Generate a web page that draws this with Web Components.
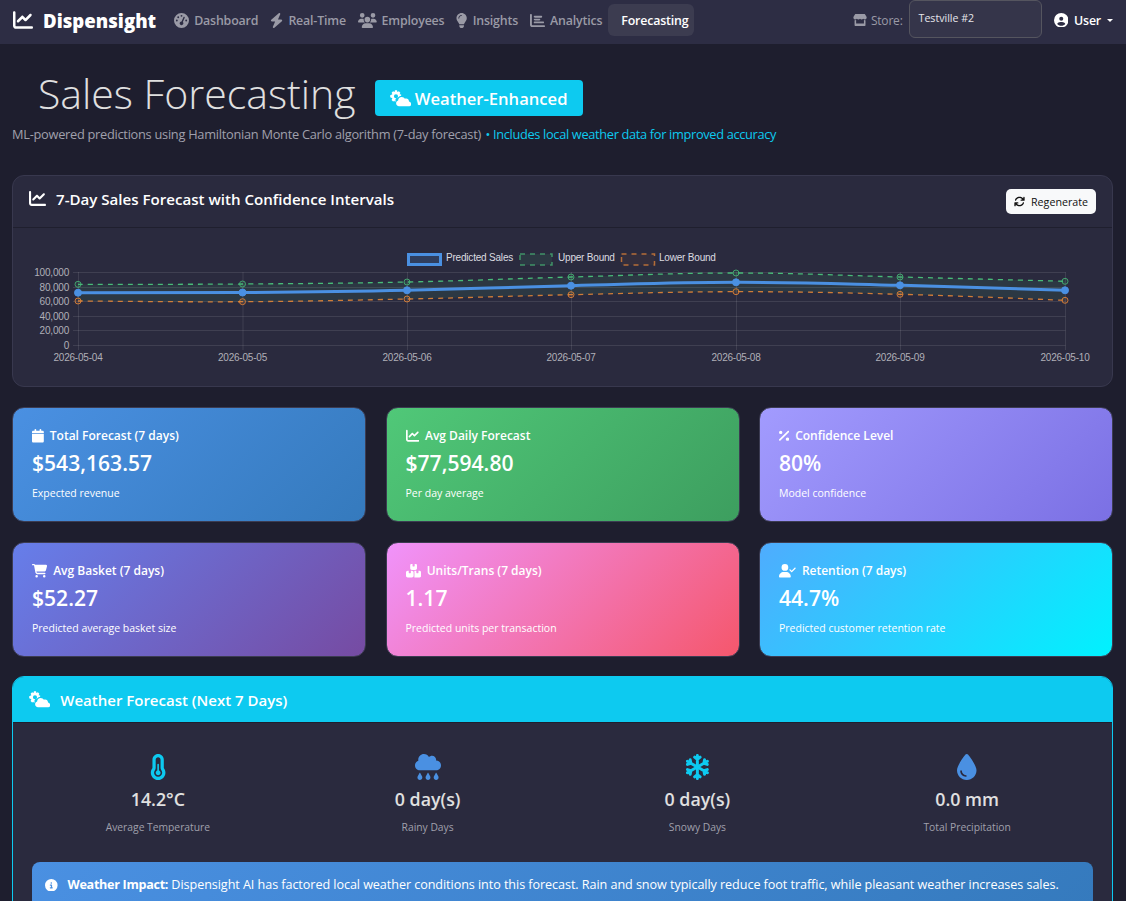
<!DOCTYPE html>
<html lang="en">
<head>
<meta charset="utf-8">
<title>Sales Forecasting</title>
<style>
  html { height: 100%; overflow: hidden; }
  body {
    margin: 0;
    height: 100%;
    overflow: hidden;
    background: #1e1e2e;
    color: #e0e0e0;
    font-family: "Open Sans", "Noto Sans", sans-serif;
    font-size: 13px;
  }
  main { display: block; padding: 0 13px 0 12px; }
</style>
</head>
<body>
<app-navbar>
  <nav-link icon="gauge">Dashboard</nav-link>
  <nav-link icon="bolt">Real-Time</nav-link>
  <nav-link icon="users">Employees</nav-link>
  <nav-link icon="bulb">Insights</nav-link>
  <nav-link icon="bars">Analytics</nav-link>
  <nav-link active>Forecasting</nav-link>
</app-navbar>
<main>
  <page-header>Sales Forecasting</page-header>
  <forecast-chart></forecast-chart>
  <stat-grid>
    <stat-card kind="blue" icon="calendar" title="Total Forecast (7 days)" value="$543,163.57">Expected revenue</stat-card>
    <stat-card kind="green" icon="line" title="Avg Daily Forecast" value="$77,594.80">Per day average</stat-card>
    <stat-card kind="violet" icon="percent" title="Confidence Level" value="80%">Model confidence</stat-card>
    <stat-card kind="purple" icon="cart" title="Avg Basket (7 days)" value="$52.27">Predicted average basket size</stat-card>
    <stat-card kind="pink" icon="boxes" title="Units/Trans (7 days)" value="1.17">Predicted units per transaction</stat-card>
    <stat-card kind="cyan" icon="usercheck" title="Retention (7 days)" value="44.7%">Predicted customer retention rate</stat-card>
  </stat-grid>
  <weather-panel>
    <weather-stat icon="temp" color="#0dcaf0" value="14.2°C">Average Temperature</weather-stat>
    <weather-stat icon="rain" color="#4a90e2" value="0 day(s)">Rainy Days</weather-stat>
    <weather-stat icon="snow" color="#0dcaf0" value="0 day(s)">Snowy Days</weather-stat>
    <weather-stat icon="drop" color="#4a90e2" value="0.0 mm">Total Precipitation</weather-stat>
  </weather-panel>
</main>

<script>
const ICONS = {
  line: [512, "M64 64c0-17.7-14.3-32-32-32S0 46.3 0 64V400c0 44.2 35.8 80 80 80H480c17.7 0 32-14.3 32-32s-14.3-32-32-32H80c-8.8 0-16-7.2-16-16V64zm406.6 86.6c12.5-12.5 12.5-32.8 0-45.3s-32.8-12.5-45.3 0L320 210.7l-57.4-57.4c-12.5-12.5-32.8-12.5-45.3 0l-112 112c-12.5 12.5-12.5 32.8 0 45.3s32.8 12.5 45.3 0L240 221.3l57.4 57.4c12.5 12.5 32.8 12.5 45.3 0l128-128z"],
  gauge: [512, "M0 256a256 256 0 1 1 512 0A256 256 0 1 1 0 256zM288 96a32 32 0 1 0 -64 0 32 32 0 1 0 64 0zM256 416c35.3 0 64-28.7 64-64c0-17.4-6.9-33.1-18.1-44.6L366 161.7c5.3-12.1-.2-26.3-12.3-31.6s-26.3 .2-31.6 12.3L257.9 288c-.6 0-1.3 0-1.9 0c-35.3 0-64 28.7-64 64s28.7 64 64 64zM176 144a32 32 0 1 0 -64 0 32 32 0 1 0 64 0zM96 288a32 32 0 1 0 0-64 32 32 0 1 0 0 64zm352-32a32 32 0 1 0 -64 0 32 32 0 1 0 64 0z"],
  bolt: [448, "M349.4 44.6c5.9-13.7 1.5-29.7-10.6-38.5s-28.6-8-39.9 1.8l-256 224c-10 8.8-13.6 22.9-8.9 35.3S50.7 288 64 288H175.5L98.6 467.4c-5.9 13.7-1.5 29.7 10.6 38.5s28.6 8 39.9-1.8l256-224c10-8.8 13.6-22.9 8.9-35.3s-16.6-20.7-30-20.7H272.5L349.4 44.6z"],
  users: [640, "M144 0a80 80 0 1 1 0 160A80 80 0 1 1 144 0zM512 0a80 80 0 1 1 0 160A80 80 0 1 1 512 0zM0 298.7C0 239.8 47.8 192 106.7 192h42.7c15.9 0 31 3.5 44.6 9.7c-1.3 7.2-1.9 14.7-1.9 22.3c0 38.2 16.8 72.5 43.3 96c-.2 0-.4 0-.7 0H21.3C9.6 320 0 310.4 0 298.7zM405.3 320c-.2 0-.4 0-.7 0c26.6-23.5 43.3-57.8 43.3-96c0-7.6-.7-15-1.9-22.3c13.6-6.3 28.7-9.7 44.6-9.7h42.7C592.2 192 640 239.8 640 298.7c0 11.8-9.6 21.3-21.3 21.3H405.3zM224 224a96 96 0 1 1 192 0 96 96 0 1 1 -192 0zM128 485.3C128 411.7 187.7 352 261.3 352H378.7C452.3 352 512 411.7 512 485.3c0 14.7-11.9 26.7-26.7 26.7H154.7c-14.7 0-26.7-11.9-26.7-26.7z"],
  bulb: [384, "M272 384c9.6-31.9 29.5-59.1 49.2-86.2l0 0c5.2-7.1 10.4-14.2 15.4-21.4c19.8-28.5 31.4-63 31.4-100.3C368 78.8 289.2 0 192 0S16 78.8 16 176c0 37.3 11.6 71.9 31.4 100.3c5 7.2 10.2 14.3 15.4 21.4l0 0c19.8 27.1 39.7 54.4 49.2 86.2H272zM192 512c44.2 0 80-35.8 80-80V416H112v16c0 44.2 35.8 80 80 80zM112 176c0 8.8-7.2 16-16 16s-16-7.2-16-16c0-61.9 50.1-112 112-112c8.8 0 16 7.2 16 16s-7.2 16-16 16c-44.2 0-80 35.8-80 80z"],
  bars: [512, "M32 32c17.7 0 32 14.3 32 32V400c0 8.8 7.2 16 16 16H480c17.7 0 32 14.3 32 32s-14.3 32-32 32H80c-44.2 0-80-35.8-80-80V64C0 46.3 14.3 32 32 32zm96 96c0-17.7 14.3-32 32-32H384c17.7 0 32 14.3 32 32s-14.3 32-32 32H160c-17.7 0-32-14.3-32-32zm32 64H320c17.7 0 32 14.3 32 32s-14.3 32-32 32H160c-17.7 0-32-14.3-32-32s14.3-32 32-32zm0 96H448c17.7 0 32 14.3 32 32s-14.3 32-32 32H160c-17.7 0-32-14.3-32-32s14.3-32 32-32z"],
  store: [576, "M547.6 103.8L490.3 13.1C485.2 5 476.1 0 466.4 0H109.6C99.9 0 90.8 5 85.7 13.1L28.3 103.8c-29.6 46.8-3.4 111.9 51.9 119.4c4 .5 8.1 .8 12.1 .8c26.1 0 49.3-11.4 65.2-29c15.9 17.6 39.1 29 65.2 29c26.1 0 49.3-11.4 65.2-29c15.9 17.6 39.1 29 65.2 29c26.2 0 49.3-11.4 65.2-29c16 17.6 39.1 29 65.2 29c4.1 0 8.1-.3 12.1-.8c55.5-7.4 81.8-72.5 52.1-119.4zM499.7 254.9l-.1 0c-5.3 .7-10.7 1.1-16.2 1.1c-12.4 0-24.3-1.9-35.4-5.3V384H128V250.6c-11.2 3.5-23.2 5.4-35.6 5.4c-5.5 0-11-.4-16.3-1.1l-.1 0c-4.1-.6-8.1-1.3-12-2.3V384v64c0 35.3 28.7 64 64 64H448c35.3 0 64-28.7 64-64V384 252.6c-4 1-8 1.8-12.3 2.3z"],
  usercircle: [512, "M399 384.2C376.9 345.8 335.4 320 288 320H224c-47.4 0-88.9 25.8-111 64.2c35.2 39.2 86.2 63.8 143 63.8s107.8-24.7 143-63.8zM0 256a256 256 0 1 1 512 0A256 256 0 1 1 0 256zm256 16a72 72 0 1 0 0-144 72 72 0 1 0 0 144z"],
  sync: [512, "M105.1 202.6c7.7-21.8 20.2-42.3 37.8-59.8c62.5-62.5 163.8-62.5 226.3 0L386.3 160H336c-17.7 0-32 14.3-32 32s14.3 32 32 32H463.5c0 0 0 0 0 0h.4c17.7 0 32-14.3 32-32V64c0-17.7-14.3-32-32-32s-32 14.3-32 32v51.2L414.4 97.6c-87.5-87.5-229.3-87.5-316.8 0C73.2 122 55.6 150.7 44.8 181.4c-5.9 16.7 2.9 34.9 19.5 40.8s34.9-2.9 40.8-19.5zM39 289.3c-5 1.5-9.8 4.2-13.7 8.2c-4 4-6.7 8.8-8.1 14c-.3 1.2-.6 2.5-.8 3.8c-.3 1.7-.4 3.4-.4 5.1V448c0 17.7 14.3 32 32 32s32-14.3 32-32V396.9l17.6 17.5 0 0c87.5 87.4 229.3 87.4 316.7 0c24.4-24.4 42.1-53.1 52.9-83.7c5.9-16.7-2.9-34.9-19.5-40.8s-34.9 2.9-40.8 19.5c-7.7 21.8-20.2 42.3-37.8 59.8c-62.5 62.5-163.8 62.5-226.3 0l-.1-.1L125.6 352H176c17.7 0 32-14.3 32-32s-14.3-32-32-32H48.4c-1.6 0-3.2 .1-4.8 .3s-3.1 .5-4.6 1z"],
  calendar: [448, "M96 32V64H48C21.5 64 0 85.5 0 112v48H448V112c0-26.5-21.5-48-48-48H352V32c0-17.7-14.3-32-32-32s-32 14.3-32 32V64H160V32c0-17.7-14.3-32-32-32S96 14.3 96 32zM448 192H0V464c0 26.5 21.5 48 48 48H400c26.5 0 48-21.5 48-48V192z"],
  percent: [384, "M374.6 118.6c12.5-12.5 12.5-32.8 0-45.3s-32.8-12.5-45.3 0l-320 320c-12.5 12.5-12.5 32.8 0 45.3s32.8 12.5 45.3 0l320-320zM128 128A64 64 0 1 0 0 128a64 64 0 1 0 128 0zM384 384a64 64 0 1 0 -128 0 64 64 0 1 0 128 0z"],
  cart: [576, "M0 24C0 10.7 10.7 0 24 0H69.5c22 0 41.5 12.8 50.6 32h411c26.3 0 45.5 25 38.6 50.4l-41 152.3c-8.5 31.4-37 53.3-69.5 53.3H170.7l5.4 28.5c2.2 11.3 12.1 19.5 23.6 19.5H488c13.3 0 24 10.7 24 24s-10.7 24-24 24H199.7c-34.6 0-64.3-24.6-70.7-58.5L77.4 54.5c-.7-3.8-4-6.5-7.9-6.5H24C10.7 48 0 37.3 0 24zM128 464a48 48 0 1 1 96 0 48 48 0 1 1 -96 0zm336-48a48 48 0 1 1 0 96 48 48 0 1 1 0-96z"],
  boxes: [576, "M248 0H208c-26.5 0-48 21.5-48 48V160c0 35.3 28.7 64 64 64H352c35.3 0 64-28.7 64-64V48c0-26.5-21.5-48-48-48H328V80c0 8.8-7.2 16-16 16H264c-8.8 0-16-7.2-16-16V0zM64 256c-35.3 0-64 28.7-64 64V448c0 35.3 28.7 64 64 64H224c35.3 0 64-28.7 64-64V320c0-35.3-28.7-64-64-64H184v80c0 8.8-7.2 16-16 16H120c-8.8 0-16-7.2-16-16V256H64zM352 512H512c35.3 0 64-28.7 64-64V320c0-35.3-28.7-64-64-64H472v80c0 8.8-7.2 16-16 16H408c-8.8 0-16-7.2-16-16V256H352c-15 0-28.8 5.1-39.7 13.8c4.9 10.4 7.7 22 7.7 34.2V464c0 12.2-2.8 23.8-7.7 34.2C323.2 506.9 337 512 352 512z"],
  usercheck: [640, "M96 128a128 128 0 1 1 256 0A128 128 0 1 1 96 128zM0 482.3C0 383.8 79.8 304 178.3 304h91.4C368.2 304 448 383.8 448 482.3c0 16.4-13.3 29.7-29.7 29.7H29.7C13.3 512 0 498.7 0 482.3zM625 177L497 305c-9.4 9.4-24.6 9.4-33.9 0l-64-64c-9.4-9.4-9.4-24.6 0-33.9s24.6-9.4 33.9 0l47 47L591 143c9.4-9.4 24.6-9.4 33.9 0s9.4 24.6 0 33.9z"],
  temp: [320, "M160 64c-26.5 0-48 21.5-48 48V276.5c0 17.3-7.1 31.9-15.3 42.5C86.2 332.6 80 349.5 80 368c0 44.2 35.8 80 80 80s80-35.8 80-80c0-18.5-6.2-35.4-16.7-48.9c-10.9-13.8-15.3-28.9-15.3-42.6V112c0-26.5-21.5-48-48-48zM48 112C48 50.2 98.1 0 160 0s112 50.1 112 112V276.5c0 .1 .1 .3 .2 .6c.2 .6 .8 1.6 1.7 2.8c18.9 24.4 30.1 55 30.1 88.1c0 79.5-64.5 144-144 144S16 447.5 16 368c0-33.2 11.2-63.8 30.1-88.1c.9-1.2 1.5-2.2 1.7-2.8c.1-.3 .2-.5 .2-.6V112zM208 368c0 26.5-21.5 48-48 48s-48-21.5-48-48c0-20.9 13.4-38.7 32-45.3V208c0-8.8 7.2-16 16-16s16 7.2 16 16V322.7c18.6 6.6 32 24.4 32 45.3z", true],
  rain: [512, "M96 320c-53 0-96-43-96-96c0-42.5 27.6-78.6 65.9-91.2C64.7 126.1 64 119.1 64 112C64 50.1 114.1 0 176 0c43.1 0 80.5 24.3 99.2 60c14.7-17.1 36.5-28 60.8-28c44.2 0 80 35.8 80 80c0 5.5-.6 10.8-1.6 16c.5 0 1.1 0 1.6 0c53 0 96 43 96 96s-43 96-96 96H96zm-6.8 52c1.3-2.5 3.9-4 6.8-4s5.4 1.5 6.8 4l35.1 64.6c4.1 7.5 6.2 15.8 6.2 24.3v3c0 26.5-21.5 48-48 48s-48-21.5-48-48v-3c0-8.5 2.1-16.9 6.2-24.3L89.2 372zm160 0c1.3-2.5 3.9-4 6.8-4s5.4 1.5 6.8 4l35.1 64.6c4.1 7.5 6.2 15.8 6.2 24.3v3c0 26.5-21.5 48-48 48s-48-21.5-48-48v-3c0-8.5 2.1-16.9 6.2-24.3L249.2 372zm124.9 64.6L409.2 372c1.3-2.5 3.9-4 6.8-4s5.4 1.5 6.8 4l35.1 64.6c4.1 7.5 6.2 15.8 6.2 24.3v3c0 26.5-21.5 48-48 48s-48-21.5-48-48v-3c0-8.5 2.1-16.9 6.2-24.3z"],
  drop: [384, "M192 512C86 512 0 426 0 320C0 228.8 130.2 57.7 166.6 11.7C172.6 4.2 181.5 0 191.1 0h1.8c9.6 0 18.5 4.2 24.5 11.7C253.8 57.7 384 228.8 384 320c0 106-86 192-192 192zM96 336c0-8.8-7.2-16-16-16s-16 7.2-16 16c0 61.9 50.1 112 112 112c8.8 0 16-7.2 16-16s-7.2-16-16-16c-44.2 0-80-35.8-80-80z"],
  info: [512, "M256 512A256 256 0 1 0 256 0a256 256 0 1 0 0 512zM216 336h24V272H216c-13.3 0-24-10.7-24-24s10.7-24 24-24h48c13.3 0 24 10.7 24 24v88h8c13.3 0 24 10.7 24 24s-10.7 24-24 24H216c-13.3 0-24-10.7-24-24s10.7-24 24-24zm40-208a32 32 0 1 1 0 64 32 32 0 1 1 0-64z"],
  cloudsun: [640, "M148 6L212 6L222 58L268 36L312 80L288 128L336 138L336 172C300 178 270 196 252 222C205 232 172 262 160 302L172 320L150 372L138 322L92 344L48 300L72 252L6 222L6 158L72 128L48 80L92 36L138 58ZM180 128a62 62 0 1 0 0 124 62 62 0 1 0 0-124zM272 490c-49 0-88-39-88-88 0-39 25-72 60-84 0-60 49-108 108-108 41 0 77 23 95 57 13-7 27-9 41-9 47 0 84 38 84 84l0 6c38 8 68 42 68 82 0 33-27 60-60 60z", true],
  snow: [448, null]
};

// snowflake is simplest as six rotated arms
const SNOW_ARM = '<path d="M224 256V28M224 108L170 62M224 108L278 62"/>';
const SNOW = [0, 60, 120, 180, 240, 300]
  .map(a => `<g transform="rotate(${a} 224 256)">${SNOW_ARM}</g>`).join("");

class AppIcon extends HTMLElement {
  connectedCallback() {
    const root = this.attachShadow({ mode: "open" });
    const [w, d, evenodd] = ICONS[this.getAttribute("name")];
    const body = d
      ? `<path fill="currentColor" ${evenodd ? 'fill-rule="evenodd"' : ""} d="${d}"/>`
      : `<g fill="none" stroke="currentColor" stroke-width="58" stroke-linecap="round">${SNOW}</g>`;
    root.innerHTML = `
      <style>
        :host { display: inline-flex; align-items: center; height: 1em; flex: none; }
        svg { display: block; height: 1em; width: auto; }
      </style>
      <svg viewBox="0 0 ${w} 512" aria-hidden="true">${body}</svg>`;
  }
}

class AppNavbar extends HTMLElement {
  connectedCallback() {
    this.attachShadow({ mode: "open" }).innerHTML = `
      <style>
        :host {
          display: flex;
          align-items: center;
          height: 44px;
          padding: 0 13px 4px;
          background: #2d2d44;
          box-sizing: border-box;
        }
        .brand { display: flex; align-items: center; color: #fff; font-weight: 800; font-size: 18.6px; margin-right: 12px; }
        .brand app-icon { font-size: 20px; margin-right: 10px; }
        .links { display: flex; align-items: center; }
        .right { margin-left: auto; display: flex; align-items: center; font-size: 12.4px; letter-spacing: -.2px; color: #9a9aa6; }
        .right > app-icon { font-size: 12.5px; }
        .user app-icon { font-size: 14.5px; }
        .store { margin: 0 6px 0 4px; font-size: 12px; }
        .select {
          width: 133px; height: 38px; box-sizing: border-box;
          margin-top: -2px;
          padding: 0 9px 3px;
          display: flex; align-items: center;
          background: #35354a; border: 1px solid #55555f; border-radius: 6px;
          color: #e6e6ea; font-size: 10.6px; letter-spacing: 0;
        }
        .user { display: flex; align-items: center; color: #fff; font-weight: 600; margin-left: 12px; }
        .user .n { margin: 0 6px 0 6px; }
        .caret { width: 0; height: 0; border: 3.5px solid transparent; border-top-color: #fff; border-bottom: 0; }
      </style>
      <div class="brand"><app-icon name="line"></app-icon>Dispensight</div>
      <div class="links"><slot></slot></div>
      <div class="right">
        <app-icon name="store"></app-icon><span class="store">Store:</span>
        <div class="select">Testville #2</div>
        <div class="user"><app-icon name="usercircle"></app-icon><span class="n">User</span><span class="caret"></span></div>
      </div>`;
  }
}

class NavLink extends HTMLElement {
  connectedCallback() {
    const icon = this.getAttribute("icon");
    this.attachShadow({ mode: "open" }).innerHTML = `
      <style>
        :host {
          display: flex; align-items: center; gap: 5px;
          height: 32px; padding: 0 6px;
          font-size: 12.4px; letter-spacing: -.18px; font-weight: 600; color: #9a9aa6;
          border-radius: 6px;
        }
        :host([active]) { color: #fff; background: #3c3c50; padding-left: 13px; }
        app-icon { font-size: 15px; }
      </style>
      ${icon ? `<app-icon name="${icon}"></app-icon>` : ""}<slot></slot>`;
  }
}

class PageHeader extends HTMLElement {
  connectedCallback() {
    this.attachShadow({ mode: "open" }).innerHTML = `
      <style>
        :host { display: block; height: 131px; box-sizing: border-box; padding-top: 22px; }
        .row { display: flex; align-items: flex-start; height: 54px; padding-left: 26px; gap: 19px; }
        h1 { margin: 0; font-weight: 300; font-size: 41px; line-height: 54px; color: #e0e0e0; }
        .badge {
          display: flex; align-items: center; gap: 4px;
          height: 36px; padding: 0 16px 0 15px; margin-top: 14px;
          background: #0dcaf0; color: #fff; border-radius: 4px;
          font-size: 16.6px; font-weight: 600;
        }
        .badge app-icon { font-size: 17px; }
        p { margin: 4px 0 0; font-size: 12.8px; letter-spacing: -.27px; line-height: 20px; color: #a0a0ac; }
        p span { color: #0dcaf0; margin-left: 1.5px; letter-spacing: -.33px; }
      </style>
      <div class="row"><h1><slot></slot></h1><div class="badge"><app-icon name="cloudsun"></app-icon>Weather-Enhanced</div></div>
      <p>ML-powered predictions using Hamiltonian Monte Carlo algorithm (7-day forecast) <span>• Includes local weather data for improved accuracy</span></p>`;
  }
}

// chart points are in page px relative to the card's top-left corner
const DATES = ["2026-05-04", "2026-05-05", "2026-05-06", "2026-05-07", "2026-05-08", "2026-05-09", "2026-05-10"];
const XS = [65, 229.5, 394, 558, 723, 887, 1052];
const PREDICTED = [64.7, 64.5, 62.3, 57.7, 54.3, 57.3, 62.3];
const UPPER = [56.3, 56, 54, 49, 45, 49, 53.3];
const LOWER = [73, 73.7, 71, 66.7, 63.7, 66.3, 72.3];
const TICKS = ["100,000", "80,000", "60,000", "40,000", "20,000", "0"];

function smooth(ys, reverse) {
  let pts = XS.map((x, i) => [x, ys[i]]);
  if (reverse) pts = pts.reverse();
  let d = "";
  const t = 0.2;
  pts.forEach((p, i) => {
    if (i === 0) return;
    const a = pts[i - 2] || pts[i - 1], b = pts[i - 1], n = pts[i + 1] || p;
    const c1 = [b[0] + (p[0] - a[0]) * t, b[1] + (p[1] - a[1]) * t];
    const c2 = [p[0] - (n[0] - b[0]) * t, p[1] - (n[1] - b[1]) * t];
    d += `C${c1[0].toFixed(1)} ${c1[1].toFixed(1)} ${c2[0].toFixed(1)} ${c2[1].toFixed(1)} ${p[0]} ${p[1]}`;
  });
  return d;
}

class ForecastChart extends HTMLElement {
  connectedCallback() {
    const top = 44, bottom = 117, step = (bottom - top) / 5;
    const grid = TICKS.map((t, i) => {
      const y = Math.round(top + step * i) + .5;
      return `<line x1="60" x2="1052.5" y1="${y}" y2="${y}" class="grid"/>
        <text x="56" y="${y + 3}" text-anchor="end" class="tick">${t}</text>`;
    }).join("");
    const cols = XS.map((x, i) => `<line x1="${x + .5}" x2="${x + .5}" y1="${top}" y2="${bottom + 5}" class="grid"/>
      <text x="${x}" y="${bottom + 16}" text-anchor="middle" class="tick">${DATES[i]}</text>`).join("");
    const dots = (ys, cls, r) => XS.map((x, i) => `<circle cx="${x}" cy="${ys[i]}" r="${r}" class="${cls}"/>`).join("");
    const band = `M${XS[0]} ${UPPER[0]}${smooth(UPPER)}L${XS[6]} ${LOWER[6]}${smooth(LOWER, true)}Z`;

    this.attachShadow({ mode: "open" }).innerHTML = `
      <style>
        :host {
          display: block; height: 212px; box-sizing: border-box;
          background: #2a2a3e; border: 1px solid #38384e; border-radius: 12px; overflow: hidden;
        }
        header {
          display: flex; align-items: center; justify-content: space-between;
          height: 52px; padding: 0 16px; box-sizing: border-box;
          border-bottom: 1px solid #1f1f2e;
          color: #fff;
        }
        h2 { margin: 0 0 6px; display: flex; align-items: center; gap: 10px; font-size: 15.1px; font-weight: 600; }
        h2 app-icon { font-size: 17px; }
        button {
          display: flex; align-items: center; gap: 6px;
          width: 90px; height: 25px; padding: 0 8px; box-sizing: border-box;
          background: #f8f9fa; color: #111; border: 0; border-radius: 5px;
          font: 10.7px "Open Sans", sans-serif;
        }
        button app-icon { font-size: 11px; }
        svg { display: block; }
        text { font: 10px "Liberation Sans", Arial, sans-serif; letter-spacing: -.2px; }
        .tick { fill: #b0b0b8; }
        .leg { fill: #dcdce0; }
        .grid { stroke: rgba(255,255,255,.1); stroke-width: 1; }
        .pred { fill: none; stroke: #4a90e2; stroke-width: 3; }
        .up { fill: none; stroke: #48bb78; stroke-width: 1.3; stroke-dasharray: 5 5; }
        .lo { fill: none; stroke: #ed8936; stroke-width: 1.3; stroke-dasharray: 5 5; opacity: .85; }
        .dp { fill: #4a90e2; stroke: #4a90e2; }
        .du { fill: rgba(72,187,120,.1); stroke: #48bb78; stroke-opacity: .8; }
        .dl { fill: rgba(237,137,54,.1); stroke: #ed8936; stroke-opacity: .8; }
      </style>
      <header>
        <h2><app-icon name="line"></app-icon>7-Day Sales Forecast with Confidence Intervals</h2>
        <button><app-icon name="sync"></app-icon>Regenerate</button>
      </header>
      <svg width="1099" height="158" viewBox="0 0 1099 158">
        <rect x="395.5" y="26.5" width="32" height="10" fill="rgba(74,144,226,.2)" stroke="#4a90e2" stroke-width="3"/>
        <text x="433" y="33" class="leg">Predicted Sales</text>
        <rect x="507" y="26" width="32" height="11" fill="rgba(72,187,120,.1)" stroke="#48bb78" stroke-opacity=".7" stroke-width="1.5" stroke-dasharray="5 5"/>
        <text x="545" y="33" class="leg">Upper Bound</text>
        <rect x="608.5" y="26" width="33" height="11" fill="rgba(237,137,54,.05)" stroke="#ed8936" stroke-opacity=".7" stroke-width="1.5" stroke-dasharray="5 5"/>
        <text x="646" y="33" class="leg">Lower Bound</text>
        ${grid}${cols}
        <path d="${band}" fill="rgba(72,187,120,.1)"/>
        <path d="M${XS[0]} ${UPPER[0]}${smooth(UPPER)}" class="up"/>
        <path d="M${XS[0]} ${LOWER[0]}${smooth(LOWER)}" class="lo"/>
        <path d="M${XS[0]} ${PREDICTED[0]}${smooth(PREDICTED)}" class="pred"/>
        ${dots(UPPER, "du", 3)}${dots(LOWER, "dl", 3)}${dots(PREDICTED, "dp", 3.5)}
      </svg>`;
  }
}

class StatGrid extends HTMLElement {
  connectedCallback() {
    this.attachShadow({ mode: "open" }).innerHTML = `
      <style>
        :host {
          display: grid;
          grid-template-columns: repeat(3, 1fr);
          grid-auto-rows: 115px;
          gap: 20px 19.5px;
          margin: 20px 0 19px;
        }
      </style>
      <slot></slot>`;
  }
}

const GRADIENTS = {
  blue: "#4a90e2, #357abd",
  green: "#50c878, #3d9e5f",
  violet: "#a29bfe, #7b70e4",
  purple: "#667eea, #764ba2",
  pink: "#f093fb, #f5576c",
  cyan: "#4facfe, #00f2fe"
};

class StatCard extends HTMLElement {
  connectedCallback() {
    const grad = GRADIENTS[this.getAttribute("kind")];
    this.attachShadow({ mode: "open" }).innerHTML = `
      <style>
        :host {
          display: block; box-sizing: border-box;
          padding: 18px 19px;
          background: linear-gradient(135deg, ${grad});
          border: 1px solid #3c3c52; border-radius: 12px;
          color: #fff;
        }
        .t { display: flex; align-items: center; gap: 6px; font-size: 12px; font-weight: 600; line-height: 20px; }
        .t app-icon { font-size: 13.5px; }
        .v { font-size: 21.1px; font-weight: 600; line-height: 32px; margin-top: 1px; }
        .s { font-size: 10.5px; line-height: 16px; margin-top: 6px; }
      </style>
      <div class="t"><app-icon name="${this.getAttribute("icon")}"></app-icon>${this.getAttribute("title")}</div>
      <div class="v">${this.getAttribute("value")}</div>
      <div class="s"><slot></slot></div>`;
  }
}

class WeatherPanel extends HTMLElement {
  connectedCallback() {
    this.attachShadow({ mode: "open" }).innerHTML = `
      <style>
        :host {
          display: block;
          background: #2a2a3e; border: 1px solid #0dcaf0; border-radius: 12px; overflow: hidden;
        }
        header {
          display: flex; align-items: center; gap: 10px;
          height: 45px; padding: 0 16px;
          background: #0dcaf0; color: #fff;
          border-bottom: 1px solid #1f1f2e;
          font-size: 15px; font-weight: 600;
        }
        header app-icon { font-size: 17px; }
        .body { padding: 31px 19px 40px; }
        .cols { display: grid; grid-template-columns: repeat(4, 1fr); margin: 0 -9px; }
        .alert {
          display: flex; align-items: center; gap: 10px;
          margin-top: 27px; padding: 14px 13px;
          background: linear-gradient(135deg, #4a90e2, #357abd);
          border-radius: 8px; color: #fff; font-size: 12.6px; letter-spacing: -.06px; line-height: 18px;
        }
        .alert b { font-weight: 700; letter-spacing: -.3px; }
      </style>
      <header><app-icon name="cloudsun"></app-icon>Weather Forecast (Next 7 Days)</header>
      <div class="body">
        <div class="cols"><slot></slot></div>
        <div class="alert"><app-icon name="info"></app-icon><span><b>Weather Impact:</b> Dispensight AI has factored local weather conditions into this forecast. Rain and snow typically reduce foot traffic, while pleasant weather increases sales.</span></div>
      </div>`;
  }
}

class WeatherStat extends HTMLElement {
  connectedCallback() {
    this.attachShadow({ mode: "open" }).innerHTML = `
      <style>
        :host { display: flex; flex-direction: column; align-items: center; }
        app-icon { font-size: 26px; color: ${this.getAttribute("color")}; }
        .v { font-size: 17.8px; font-weight: 600; line-height: 24px; margin-top: 7px; color: #e0e0e0; }
        .l { font-size: 10.3px; line-height: 16px; margin-top: 8px; color: #a0a0ac; }
      </style>
      <app-icon name="${this.getAttribute("icon")}"></app-icon>
      <div class="v">${this.getAttribute("value")}</div>
      <div class="l"><slot></slot></div>`;
  }
}

customElements.define("app-icon", AppIcon);
customElements.define("app-navbar", AppNavbar);
customElements.define("nav-link", NavLink);
customElements.define("page-header", PageHeader);
customElements.define("forecast-chart", ForecastChart);
customElements.define("stat-grid", StatGrid);
customElements.define("stat-card", StatCard);
customElements.define("weather-panel", WeatherPanel);
customElements.define("weather-stat", WeatherStat);
</script>
</body>
</html>
